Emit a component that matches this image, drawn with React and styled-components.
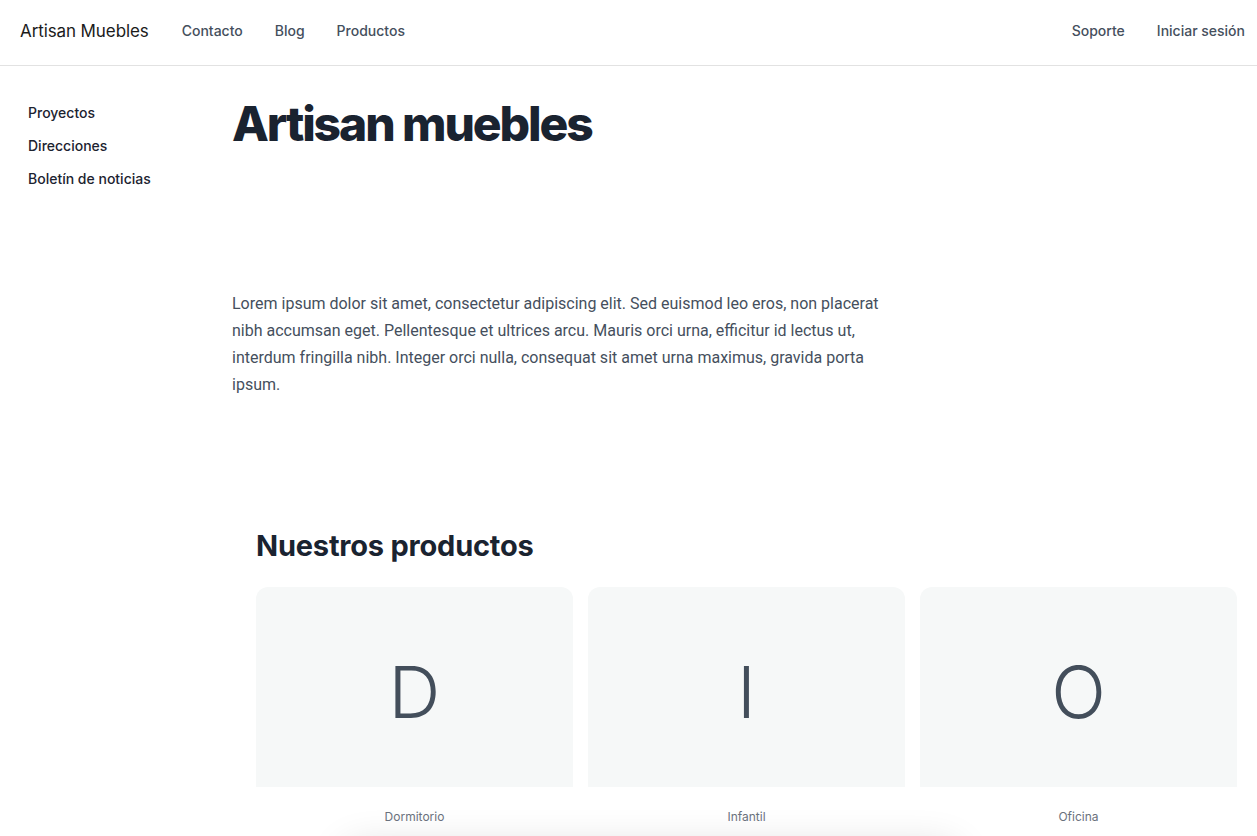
import React from 'react';
import styled, { createGlobalStyle } from 'styled-components';

const GlobalStyle = createGlobalStyle`
  body {
    margin: 0;
    background: #ffffff;
    font-family: Inter, "Noto Sans", "Liberation Sans", sans-serif;
    -webkit-font-smoothing: antialiased;
  }
  * { box-sizing: border-box; }
`;

const Header = styled.header`
  align-items: center;
  border-bottom: 1px solid #e2e2e2;
  display: flex;
  height: 66px;
  padding: 0 12px 4px 20px;
`;

const Logo = styled.a`
  color: #1b1b1b;
  font-size: 17px;
  font-weight: 400;
  letter-spacing: -0.1px;
  margin-right: 17px;
  text-decoration: none;
`;

const NavGroup = styled.nav`
  display: flex;
  margin-left: ${props => (props.right ? 'auto' : '0')};
`;

const NavLink = styled.a`
  color: #454f5d;
  font-size: 14px;
  font-weight: 500;
  padding: 0 16px;
  text-decoration: none;
  &:last-child {
    padding-right: ${props => (props.edge ? '0' : '16px')};
  }
`;

const Body = styled.div`
  display: grid;
  grid-template-columns: 232px 1fr;
`;

const Sidebar = styled.aside`
  display: flex;
  flex-direction: column;
  gap: 16px;
  padding: 38px 0 0 28px;
`;

const SideLink = styled.a`
  color: #1c2330;
  font-size: 14px;
  font-weight: 500;
  line-height: 17px;
  text-decoration: none;
`;

const Main = styled.main`
  padding-top: 28px;
`;

const Title = styled.h1`
  color: #1a2330;
  font-size: 48px;
  font-weight: 800;
  letter-spacing: -2.1px;
  line-height: 60px;
  margin: 0;
`;

const Intro = styled.p`
  color: #454f5d;
  font-family: Roboto, Inter, "Liberation Sans", sans-serif;
  font-size: 16px;
  line-height: 27px;
  margin: 136px 0 0;
  max-width: 664px;
`;

const Products = styled.section`
  padding: 131px 20px 0 24px;
`;

const SectionTitle = styled.h2`
  color: #1a2330;
  font-size: 29px;
  font-weight: 700;
  letter-spacing: -0.2px;
  line-height: 34px;
  margin: 0 0 24px;
`;

const CardGrid = styled.div`
  display: grid;
  gap: 15px;
  grid-template-columns: repeat(3, 1fr);
`;

const Card = styled.div`
  display: flex;
  flex-direction: column;
`;

const CardImage = styled.div`
  align-items: center;
  background: #f6f8f8;
  border-radius: 12px 12px 0 0;
  color: #434e5b;
  display: flex;
  font-size: 72px;
  font-weight: 300;
  height: 200px;
  justify-content: center;
  padding-top: 8px;
`;

const CardLabel = styled.div`
  color: #6a717c;
  font-size: 12px;
  padding-top: 22px;
  text-align: center;
`;

const Footer = styled.div`
  background: #ffffff;
  border-radius: 12px;
  box-shadow: 0 -2px 40px rgba(0, 0, 0, 0.16);
  height: 120px;
  margin: 26px 0 0 90px;
  width: 610px;
`;

const products = [
  { letter: 'D', name: 'Dormitorio' },
  { letter: 'I', name: 'Infantil' },
  { letter: 'O', name: 'Oficina' },
];

const App = () => (
  <>
    <GlobalStyle />
    <Header>
      <Logo href="#">Artisan Muebles</Logo>
      <NavGroup>
        <NavLink href="#">Contacto</NavLink>
        <NavLink href="#">Blog</NavLink>
        <NavLink href="#">Productos</NavLink>
      </NavGroup>
      <NavGroup right>
        <NavLink href="#">Soporte</NavLink>
        <NavLink href="#" edge>Iniciar sesión</NavLink>
      </NavGroup>
    </Header>
    <Body>
      <Sidebar>
        <SideLink href="#">Proyectos</SideLink>
        <SideLink href="#">Direcciones</SideLink>
        <SideLink href="#">Boletín de noticias</SideLink>
      </Sidebar>
      <Main>
        <Title>Artisan muebles</Title>
        <Intro>
          Lorem ipsum dolor sit amet, consectetur adipiscing elit. Sed euismod leo eros, non placerat
          nibh accumsan eget. Pellentesque et ultrices arcu. Mauris orci urna, efficitur id lectus ut,
          interdum fringilla nibh. Integer orci nulla, consequat sit amet urna maximus, gravida porta
          ipsum.
        </Intro>
        <Products>
          <SectionTitle>Nuestros productos</SectionTitle>
          <CardGrid>
            {products.map(p => (
              <Card key={p.name}>
                <CardImage>{p.letter}</CardImage>
                <CardLabel>{p.name}</CardLabel>
              </Card>
            ))}
          </CardGrid>
          <Footer />
        </Products>
      </Main>
    </Body>
  </>
);

export default App;
